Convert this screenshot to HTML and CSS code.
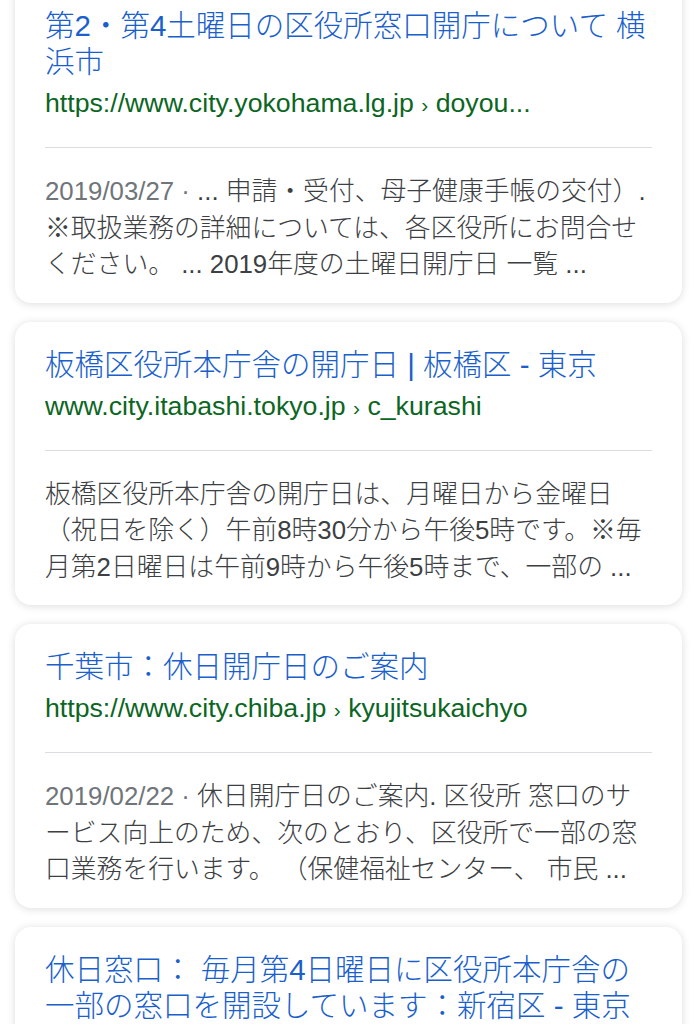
FILE: index.html
```html
<!DOCTYPE html>
<html lang="ja">
<head>
    <meta charset="UTF-8">
    <meta name="viewport" content="width=device-width, initial-scale=1.0">
    <title>区役所 土曜 開庁 - 検索結果</title>
    <link rel="stylesheet" href="styles.css">
</head>
<body>
    <div class="results">
        <div class="card">
            <a class="title" href="#">第2・第4土曜日の区役所窓口開庁について 横浜市</a>
            <div class="url">https://www.city.yokohama.lg.jp <span class="sep">›</span> doyou...</div>
            <div class="divider"></div>
            <div class="snippet"><span class="date">2019/03/27 · </span>... 申請・受付、母子健康手帳の交付）. ※取扱業務の詳細については、各区役所にお問合せください。 ... 2019年度の土曜日開庁日 一覧 ...</div>
        </div>
        <div class="card">
            <a class="title" href="#">板橋区役所本庁舎の開庁日 | 板橋区 - 東京</a>
            <div class="url">www.city.itabashi.tokyo.jp <span class="sep">›</span> c_kurashi</div>
            <div class="divider"></div>
            <div class="snippet">板橋区役所本庁舎の開庁日は、月曜日から金曜日（祝日を除く）午前8時30分から午後5時です。※毎月第2日曜日は午前9時から午後5時まで、一部の ...</div>
        </div>
        <div class="card">
            <a class="title" href="#">千葉市：休日開庁日のご案内</a>
            <div class="url">https://www.city.chiba.jp <span class="sep">›</span> kyujitsukaichyo</div>
            <div class="divider"></div>
            <div class="snippet"><span class="date">2019/02/22 · </span>休日開庁日のご案内. 区役所 窓口のサービス向上のため、次のとおり、区役所で一部の窓口業務を行います。 （保健福祉センター、 市民 ...</div>
        </div>
        <div class="card">
            <a class="title" href="#">休日窓口： 毎月第4日曜日に区役所本庁舎の一部の窓口を開設しています：新宿区 - 東京</a>
        </div>
    </div>
</body>
</html>
```

FILE: styles.css
```css
body {
    margin: 0;
    padding: 0;
    background: #fff;
    font-family: 'Liberation Sans', 'Noto Sans CJK JP', sans-serif;
}
.results {
    margin-top: -17px;
    padding: 0 15px;
}
.card {
    background: #fff;
    border-radius: 16px;
    box-shadow: 0 1px 8px rgba(0, 0, 0, 0.14);
    padding: 25px 30px 20px;
    margin-bottom: 19px;
}
.title {
    display: block;
    font-size: 29.5px;
    font-weight: 300;
    line-height: 36px;
    color: #1a5fcc;
    text-decoration: none;
}
.url {
    margin-top: 5px;
    font-size: 26.7px;
    line-height: 36px;
    color: #0b6623;
    white-space: nowrap;
    overflow: hidden;
}
.sep {
    font-size: 21px;
    line-height: 1;
}
.divider {
    margin-top: 26px;
    height: 1px;
    background: #dadce0;
}
.snippet {
    margin-top: 25px;
    font-size: 25.8px;
    font-weight: 300;
    line-height: 36.5px;
    color: #3c4043;
}
.date { color: #70757a; }
```
